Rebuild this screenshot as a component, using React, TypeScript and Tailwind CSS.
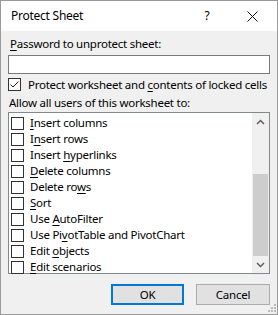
import React from 'react';

interface Perm {
  before: string;
  key: string;
  after: string;
}

// access-key letter is underlined, as in the Win32 dialog
const perms: Perm[] = [
  { before: '', key: 'I', after: 'nsert columns' },
  { before: 'I', key: 'n', after: 'sert rows' },
  { before: 'Insert ', key: 'h', after: 'yperlinks' },
  { before: '', key: 'D', after: 'elete columns' },
  { before: 'Delete ro', key: 'w', after: 's' },
  { before: '', key: 'S', after: 'ort' },
  { before: 'Use ', key: 'A', after: 'utoFilter' },
  { before: 'Use Pi', key: 'v', after: 'otTable and PivotChart' },
  { before: 'Edit ', key: 'o', after: 'bjects' },
  { before: '', key: 'E', after: 'dit scenarios' },
];

const Box = ({ checked = false }: { checked?: boolean }) => (
  <span className="w-[13px] h-[13px] shrink-0 border border-[#333333] bg-white flex items-center justify-center">
    {checked && (
      <svg width="11" height="11" viewBox="0 0 11 11">
        <path d="M1.5 5.5 L4 8 L9.5 2.5" fill="none" stroke="#222" strokeWidth="1" />
      </svg>
    )}
  </span>
);

const Key = ({ children }: { children: React.ReactNode }) => <span className="underline underline-offset-2">{children}</span>;

const App: React.FC = () => {
  return (
    <div
      className="w-[278px] h-[315px] border border-[#9a9a9a] flex flex-col text-[11.5px] tracking-[-0.25px] text-black bg-[#f0f0f0] overflow-hidden whitespace-nowrap"
      style={{ fontFamily: '"Noto Sans", "Open Sans", sans-serif' }}
    >
      {/* title bar */}
      <div className="h-[30px] bg-white flex items-center shrink-0">
        <span className="pl-[10px] flex-1 text-[12px]">Protect Sheet</span>
        <span className="w-[14px] text-center mr-[33px] text-[12px]">?</span>
        <svg width="11" height="11" viewBox="0 0 11 11" className="mr-[19px]">
          <path d="M0.5 0.5 L10.5 10.5 M10.5 0.5 L0.5 10.5" stroke="#111" strokeWidth="1" />
        </svg>
      </div>

      {/* body */}
      <div className="flex-1 flex flex-col px-[7px] pt-[5px] relative">
        <div className="h-[16px] leading-[16px] pl-[2px]">
          <Key>P</Key>assword to unprotect sheet:
        </div>
        <div className="mt-[3px] h-[19px] bg-white border border-[#7a7a7a]" />

        <div className="mt-[4px] h-[13px] flex items-center gap-[7px]">
          <Box checked />
          <span className="leading-[13px]">
            Protect worksheet and <Key>c</Key>ontents of locked cells
          </span>
        </div>

        <div className="mt-[4px] h-[16px] leading-[16px] pl-[1px]">Allow all users of this worksheet to:</div>

        <div className="mt-[1px] h-[162px] border border-[#828790] bg-white flex">
          <div className="flex-1 flex flex-col pt-[2px] pl-[2px]">
            {perms.map((p) => (
              <div key={p.before + p.key} className="h-[16px] flex items-center gap-[6px]">
                <Box />
                <span className="leading-[16px]">
                  {p.before}
                  <Key>{p.key}</Key>
                  {p.after}
                </span>
              </div>
            ))}
          </div>
          {/* scrollbar */}
          <div className="w-[17px] bg-[#f0f0f0] flex flex-col">
            <div className="h-[17px] flex items-center justify-center">
              <svg width="9" height="6" viewBox="0 0 9 6">
                <path d="M1 5 L4.5 1.5 L8 5" fill="none" stroke="#606060" strokeWidth="1.5" />
              </svg>
            </div>
            <div className="flex-1 flex flex-col px-[1px]">
              <div className="h-[44px]" />
              <div className="h-[82px] bg-[#cdcdcd]" />
            </div>
            <div className="h-[17px] flex items-center justify-center">
              <svg width="9" height="6" viewBox="0 0 9 6">
                <path d="M1 1 L4.5 4.5 L8 1" fill="none" stroke="#606060" strokeWidth="1.5" />
              </svg>
            </div>
          </div>
        </div>

        <div className="mt-[10px] flex justify-end gap-[12px]">
          <button className="w-[73px] h-[21px] bg-[#e1e1e1] border-2 border-[#0078d7] leading-[17px]">OK</button>
          <button className="w-[74px] h-[21px] bg-[#e1e1e1] border border-[#adadad] leading-[19px]">Cancel</button>
        </div>

        {/* size grip */}
        <svg width="8" height="8" viewBox="0 0 8 8" className="absolute right-[1px] bottom-[2px]">
          <rect x="6" y="0" width="2" height="2" fill="#bcbcbc" />
          <rect x="3" y="3" width="2" height="2" fill="#bcbcbc" />
          <rect x="6" y="3" width="2" height="2" fill="#bcbcbc" />
          <rect x="0" y="6" width="2" height="2" fill="#bcbcbc" />
          <rect x="3" y="6" width="2" height="2" fill="#bcbcbc" />
          <rect x="6" y="6" width="2" height="2" fill="#bcbcbc" />
        </svg>
      </div>
    </div>
  );
};

export default App;
